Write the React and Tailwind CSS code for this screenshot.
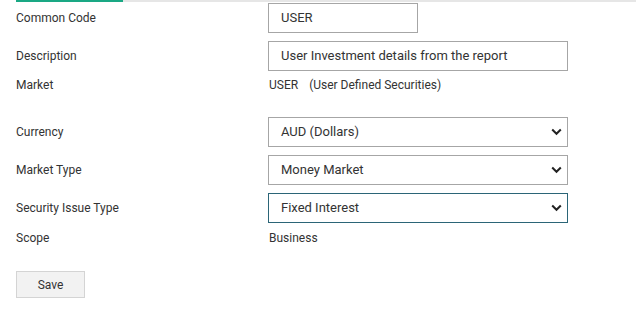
import React from "react";

const font = { fontFamily: "Roboto, 'Liberation Sans', sans-serif" };

function Chevron() {
  return (
    <svg width="11" height="8" viewBox="0 0 11 8" className="shrink-0">
      <polyline points="1.2,1.5 5.5,5.8 9.8,1.5" fill="none" stroke="#222" strokeWidth="2" />
    </svg>
  );
}

function Row({ label, className = "", children }) {
  return (
    <div className={`flex items-center ${className}`}>
      <div className="w-[252px] shrink-0 text-[12px] text-[#333]">{label}</div>
      {children}
    </div>
  );
}

function Select({ value, active }) {
  return (
    <div className={`flex h-[30px] w-[300px] items-center justify-between border pl-3 pr-[5px] text-[13px] text-[#333] ${active ? "border-[#2b6577]" : "border-[#a6a6a6]"}`}>
      <span>{value}</span>
      <Chevron />
    </div>
  );
}

export default function App() {
  return (
    <div className="h-[312px] w-[636px] bg-white" style={font}>
      <div className="flex h-[2px]">
        <div className="ml-4 w-[107px] bg-[#1aa884]" />
        <div className="flex-1 bg-[#e6e6e6]" />
      </div>
      <div className="px-4">
        <Row label="Common Code" className="mt-[1px] h-[30px]">
          <div className="flex h-[30px] w-[150px] items-center border border-[#a6a6a6] px-3 text-[13px] text-[#333]">USER</div>
        </Row>
        <Row label="Description" className="mt-2 h-[30px]">
          <div className="flex h-[30px] w-[300px] items-center border border-[#a6a6a6] px-3 text-[13px] text-[#333]">User Investment details from the report</div>
        </Row>
        <Row label="Market" className="h-[28px]">
          <div className="flex gap-[11px] pl-px text-[12px] text-[#333]">
            <span>USER</span>
            <span>(User Defined Securities)</span>
          </div>
        </Row>
        <Row label="Currency" className="mt-[18px] h-[30px]">
          <Select value="AUD (Dollars)" />
        </Row>
        <Row label="Market Type" className="mt-2 h-[30px]">
          <Select value="Money Market" />
        </Row>
        <Row label="Security Issue Type" className="mt-2 h-[30px]">
          <Select value="Fixed Interest" active />
        </Row>
        <Row label="Scope" className="h-[30px]">
          <div className="pl-px text-[12px] text-[#333]">Business</div>
        </Row>
        <button className="mt-[18px] flex h-[27px] w-[69px] items-center justify-center border border-[#d4d4d4] bg-[#f2f2f2] text-[12px] text-[#333]">
          Save
        </button>
      </div>
    </div>
  );
}
